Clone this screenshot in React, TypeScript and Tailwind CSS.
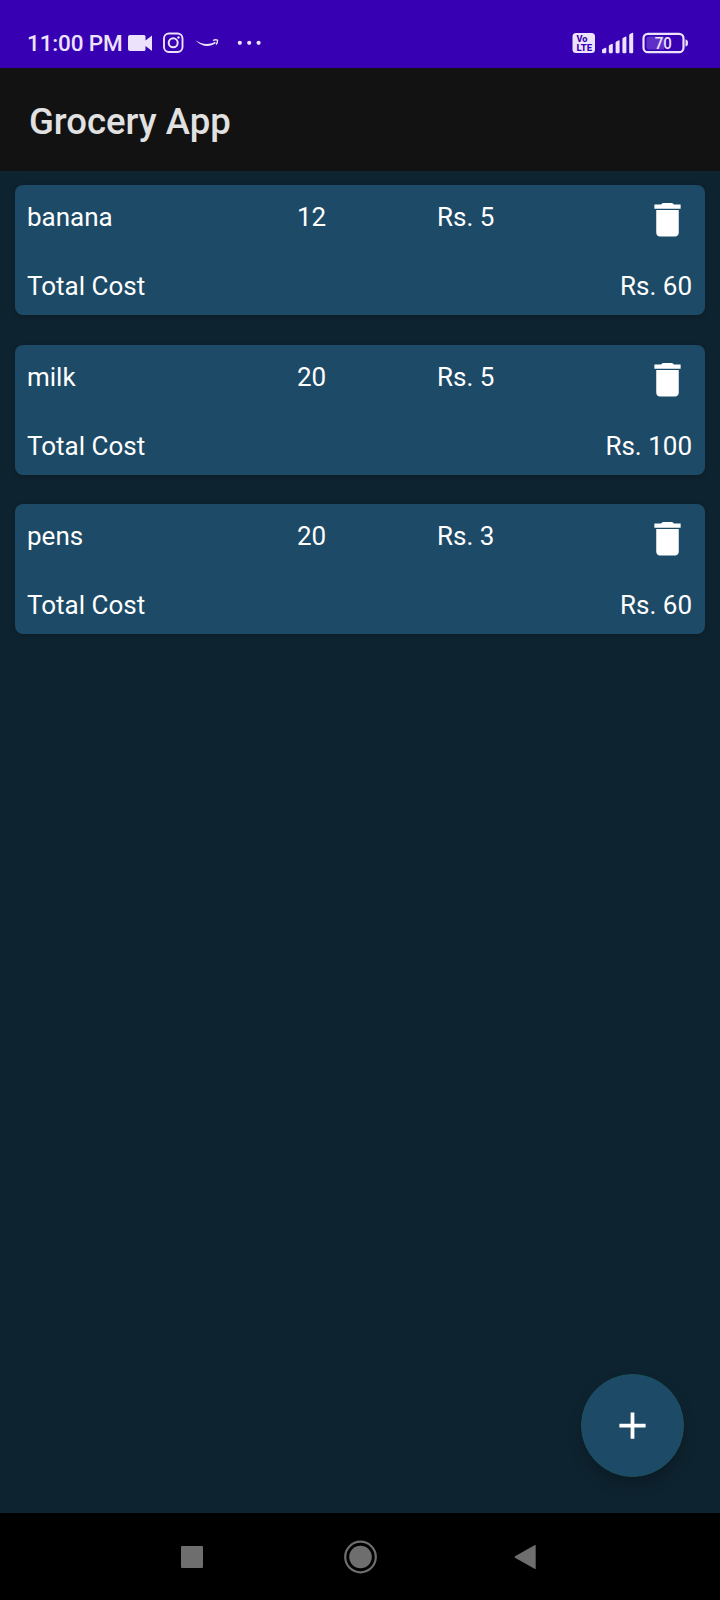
import React from "react";

type Item = { name: string; quantity: number; price: number };

const items: Item[] = [
  { name: "banana", quantity: 12, price: 5 },
  { name: "milk", quantity: 20, price: 5 },
  { name: "pens", quantity: 20, price: 3 },
];

function StatusBar() {
  return (
    <div className="flex h-[68px] w-full shrink-0 items-end justify-between bg-[#3700b3] pr-[32px] pb-[10px] pl-[27px] text-[#ece2fb]">
      <div className="flex h-8 items-center">
        <span className="w-[100px] pt-[2px] text-[22.500px] leading-8 font-medium tracking-[-0.150px] whitespace-nowrap">11:00 PM</span>
        <svg className="h-8 w-[140px]" viewBox="127 26 140 32" fill="none">
          <path d="M130 35h14q1.500 0 1.500 1.500v4L152 35.500v15.500l-6.500-5v3.500q0 1.500-1.500 1.500h-14q-2 0-2-2v-12q0-2 2-2z" fill="currentColor" />
          <rect x="164" y="33.500" width="18.500" height="18.500" rx="5" stroke="currentColor" strokeWidth="1.900" />
          <circle cx="173.200" cy="42.800" r="4.500" stroke="currentColor" strokeWidth="2" />
          <circle cx="178.500" cy="37.500" r="1.200" fill="currentColor" />
          <path d="M195.500 40.200c6 4.300 13.500 5 19.500 1.500l.8 1.400c-6 4.500-14.500 3.900-20.300-2.900z" fill="currentColor" />
          <path d="M213 40.500c1.500-.8 3.200-.8 4.500-.3.200 1.500-.3 3-1.500 4.200" stroke="currentColor" strokeWidth="1.400" />
          <circle cx="239.800" cy="42.800" r="2.100" fill="currentColor" />
          <circle cx="249.200" cy="42.800" r="2.100" fill="currentColor" />
          <circle cx="258.600" cy="42.800" r="2.100" fill="currentColor" />
        </svg>
      </div>
      <svg className="h-8 w-[116px]" viewBox="572 26 116 32" fill="none">
        <rect x="572.500" y="33" width="22.500" height="20" rx="3.500" fill="currentColor" />
        <text x="576.500" y="42" fontSize="8.500" fontWeight="800" fill="#3700b3" textLength="11" lengthAdjust="spacingAndGlyphs">Vo</text>
        <text x="576.500" y="50.500" fontSize="9" fontWeight="800" fill="#3700b3" textLength="15.500" lengthAdjust="spacingAndGlyphs">LTE</text>
        <g fill="currentColor">
          <path d="M602 50q0-.8.800-1.100l2.700-1.100q.8-.2.800.6V52q0 1.200-1.200 1.200h-2q-1.100 0-1.100-1.200z" />
          <path d="M608.800 46q0-.8.800-1.100l2.400-1.100q.8-.2.800.6V52q0 1.200-1.200 1.200h-1.600q-1.200 0-1.200-1.200z" />
          <path d="M615.600 42.500q0-.8.800-1.100l2.400-1.100q.8-.2.800.6V52q0 1.200-1.200 1.200h-1.600q-1.200 0-1.200-1.200z" />
          <path d="M622.400 38.800q0-.8.800-1.100l2.400-1.100q.8-.2.800.6V52q0 1.200-1.200 1.200h-1.600q-1.200 0-1.200-1.200z" />
          <path d="M629.200 35q0-.8.800-1.100l2.400-1.100q.8-.2.800.6V52q0 1.200-1.200 1.200h-1.600q-1.200 0-1.200-1.200z" />
        </g>
        <rect x="643.500" y="33.800" width="40" height="18.400" rx="4.500" stroke="currentColor" strokeWidth="2.200" />
        <path d="M649.500 36.500H664v13h-14.500q-3 0-3-3v-7q0-3 3-3z" fill="#6030c6" />
        <path d="M685.500 39.500q2.500.3 2.500 3.500t-2.500 3.500z" fill="currentColor" />
        <text x="654.700" y="48.800" fontSize="16" fontWeight="500" fill="currentColor" textLength="17" lengthAdjust="spacingAndGlyphs">70</text>
      </svg>
    </div>
  );
}

function TrashIcon() {
  return (
    <svg className="h-[45px] w-[45px]" viewBox="0 0 24 24" fill="#ffffff">
      <path d="M6 19c0 1.100.9 2 2 2h8c1.100 0 2-.9 2-2V6.900H6V19zM19 4h-3.500l-1-.8h-5l-1 .8H5v2.200h14V4z" />
    </svg>
  );
}

function ItemCard({ name, quantity, price }: Item) {
  return (
    <div className="h-[130px] rounded-[8px] bg-[#1d4a66] pr-[13px] pl-[12px] pt-[13px] text-[26px] leading-[38px] text-white shadow-[0_1px_4px_rgba(0,0,0,0.25)]">
      <div className="flex h-[69px] items-start">
        <span className="w-[270px] shrink-0">{name}</span>
        <span className="w-[140px] shrink-0">{quantity}</span>
        <span className="w-[208px] shrink-0">Rs. {price}</span>
        <button className="-mt-[1px] shrink-0" aria-label="Delete">
          <TrashIcon />
        </button>
      </div>
      <div className="flex justify-between">
        <span>Total Cost</span>
        <span>Rs. {quantity * price}</span>
      </div>
    </div>
  );
}

export default function App() {
  return (
    <div className="flex h-[1600px] w-[720px] flex-col overflow-hidden bg-[#0e2330] font-['Roboto',sans-serif]">
      <StatusBar />
      <header className="flex h-[103px] shrink-0 items-center bg-[#121212] pl-[29px] text-[36.500px] font-medium text-[#e1e1e1]">
        <h1 className="pt-[6px]">Grocery App</h1>
      </header>
      <main className="flex flex-1 flex-col justify-between">
        <div className="flex flex-col gap-[29.500px] px-[15px] pt-[14px]">
          {items.map((item) => (
            <ItemCard key={item.name} {...item} />
          ))}
        </div>
        <button
          className="mr-[36.500px] mb-[36px] flex h-[103px] w-[103px] items-center justify-center self-end rounded-full border border-[#1b5260] bg-[#1d4a66] shadow-[0_8px_14px_rgba(0,0,0,0.22)]"
          aria-label="Add item"
        >
          <svg className="h-[45px] w-[45px]" viewBox="0 0 24 24" fill="#ffffff">
            <path d="M19 13h-6v6h-2v-6H5v-2h6V5h2v6h6v2z" />
          </svg>
        </button>
      </main>
      <nav className="flex h-[87px] shrink-0 justify-center bg-black">
        <svg className="h-[87px] w-[420px]" viewBox="150 1513 420 87" fill="#6e6e6e">
          <rect x="181" y="1546" width="22" height="22" rx="1" />
          <circle cx="360.500" cy="1557" r="15.300" fill="none" stroke="#6e6e6e" strokeWidth="2.200" />
          <circle cx="360.500" cy="1557" r="11.300" />
          <path d="M515 1556.300 535 1545q.7-.3.700.5v23q0 .8-.7.500L515 1557.700q-1-.7 0-1.400z" />
        </svg>
      </nav>
    </div>
  );
}
